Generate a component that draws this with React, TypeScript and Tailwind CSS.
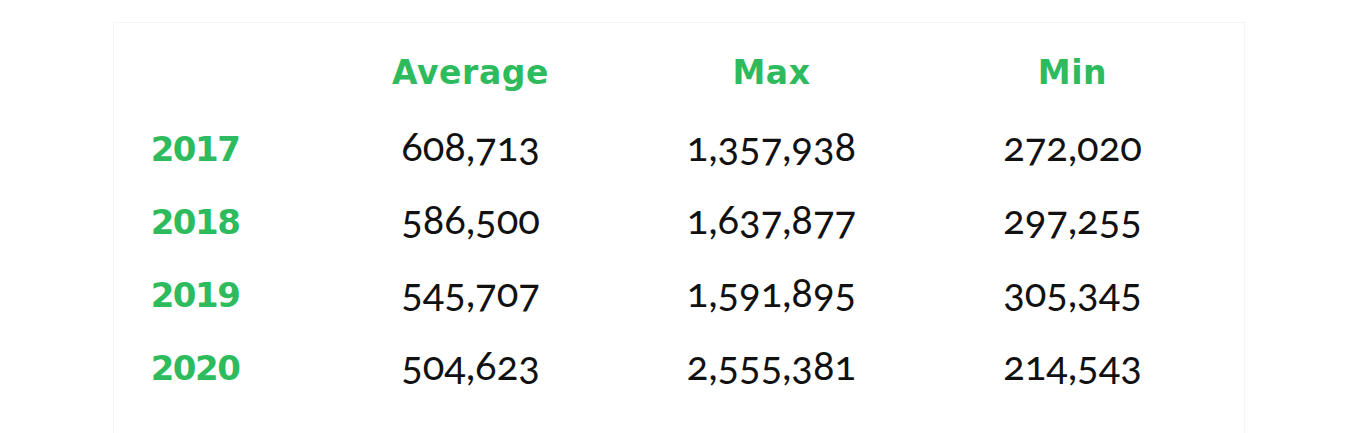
const rows = [
  { year: "2017", avg: "608,713", max: "1,357,938", min: "272,020" },
  { year: "2018", avg: "586,500", max: "1,637,877", min: "297,255" },
  { year: "2019", avg: "545,707", max: "1,591,895", min: "305,345" },
  { year: "2020", avg: "504,623", max: "2,555,381", min: "214,543" },
];

const heads = ["Average", "Max", "Min"];

export default function App() {
  return (
    <div className="w-[1364px] h-[433px] bg-white overflow-hidden pt-[22px] pl-[113px]">
      <div className="w-[1132px] h-[412px] border border-[#f4f4f4] pt-[17px]">
        {/* header */}
        <div className="grid grid-cols-[206px_301px_301px_301px] h-[73px] items-center">
          <div />
          {heads.map((h) => (
            <div
              key={h}
              className="-mt-[8px] text-center text-[33px] font-bold text-[#2dbb5d] tracking-[0.6px] font-['DejaVu_Sans',sans-serif]"
            >
              {h}
            </div>
          ))}
        </div>

        {/* data rows */}
        {rows.map((r) => (
          <div
            key={r.year}
            className="grid grid-cols-[206px_301px_301px_301px] h-[73px] items-center"
          >
            <div className="w-[162px] text-center text-[34px] font-bold text-[#2dbb5d] tracking-[-1.5px] font-['DejaVu_Sans',sans-serif]">
              {r.year}
            </div>
            <div className="-mt-[8px] text-center text-[40px] text-[#111] oldstyle-nums font-['Lato',sans-serif]">
              {r.avg}
            </div>
            <div className="-mt-[8px] text-center text-[40px] text-[#111] oldstyle-nums font-['Lato',sans-serif]">
              {r.max}
            </div>
            <div className="-mt-[8px] text-center text-[40px] text-[#111] oldstyle-nums font-['Lato',sans-serif]">
              {r.min}
            </div>
          </div>
        ))}
      </div>
    </div>
  );
}
